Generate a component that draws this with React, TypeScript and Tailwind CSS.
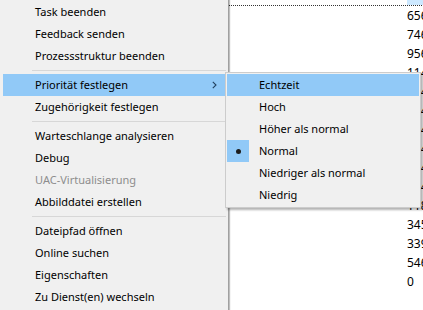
import React from "react";

type Entry = { label?: string; disabled?: boolean; active?: boolean; sub?: boolean; sep?: boolean };

// ===== Main context menu entries =====
const mainItems: Entry[] = [
  { label: "Task beenden" },
  { label: "Feedback senden" },
  { label: "Prozessstruktur beenden" },
  { sep: true },
  { label: "Priorität festlegen", active: true, sub: true },
  { label: "Zugehörigkeit festlegen" },
  { sep: true },
  { label: "Warteschlange analysieren" },
  { label: "Debug" },
  { label: "UAC-Virtualisierung", disabled: true },
  { label: "Abbilddatei erstellen" },
  { sep: true },
  { label: "Dateipfad öffnen" },
  { label: "Online suchen" },
  { label: "Eigenschaften" },
  { label: "Zu Dienst(en) wechseln" },
];

const priorities = ["Echtzeit", "Hoch", "Höher als normal", "Normal", "Niedriger als normal", "Niedrig"];

const numbers = ["1148", "6560", "7460", "9560", "1148", "1148", "1148", "1148", "1148", "1148", "1148", "1180", "3452", "3396", "5460", "0"];

const font = { fontFamily: '"Noto Sans", "Segoe UI", sans-serif' };

function Chevron() {
  return (
    <svg width="5" height="8" viewBox="0 0 5 8" className="absolute right-[8px] top-[7px]">
      <path d="M0.8 0.8 L4 4 L0.8 7.2" fill="none" stroke="#23415f" strokeWidth="1.1" />
    </svg>
  );
}

export default function App() {
  return (
    <div className="relative flex w-[423px] h-[310px] overflow-hidden bg-white text-[11px] text-black" style={font}>
      {/* ===== Main menu ===== */}
      <div className="w-[229px] h-full shrink-0 bg-[#f0f0f0] pt-[1px] border-r border-[#a0a0a0] shadow-[1px_0_1px_rgba(0,0,0,0.25)] z-10">
        {mainItems.map((it, i) =>
          it.sep ? (
            <div key={i} className="h-[7px] flex items-center pl-[32px] pr-[2px]">
              <div className="h-[1px] w-full bg-[#d7d7d7]" />
            </div>
          ) : (
            <div
              key={i}
              className={`relative mx-[3px] h-[22px] flex items-center pl-[32px] ${it.active ? "bg-[#91c9f7]" : ""} ${
                it.disabled ? "text-[#8d8d8d]" : ""
              }`}
            >
              {it.label}
              {it.sub && <Chevron />}
            </div>
          )
        )}
      </div>

      {/* ===== List behind the menu ===== */}
      <div className="flex-1 flex flex-col -mt-[13px] text-[12px]">
        {numbers.map((n, i) => (
          <div
            key={i}
            className={`h-[19px] shrink-0 flex items-center pl-[178px] whitespace-nowrap ${
              i === 0 ? "border-b border-dotted border-[#333]" : ""
            }`}
          >
            <span className={i === 0 ? "bg-[#cce8ff]" : ""}>{n}</span>
          </div>
        ))}
      </div>

      {/* ===== Priority submenu ===== */}
      <div className="absolute left-[225px] top-[72px] w-[196px] p-[1px] bg-[#f0f0f0] border border-[#cccccc] shadow-[2px_2px_2px_rgba(0,0,0,0.3)] z-20">
        {priorities.map((p, i) => (
          <div key={p} className={`relative h-[22px] flex items-center pl-[32px] ${i === 0 ? "bg-[#91c9f7]" : ""}`}>
            {p === "Normal" && (
              <div className="absolute left-0 top-0 w-[22px] h-[22px] bg-[#91c9f7] flex items-center justify-center">
                <div className="w-[5px] h-[5px] rounded-full bg-[#1c1c1c]" />
              </div>
            )}
            {p}
          </div>
        ))}
      </div>
    </div>
  );
}
